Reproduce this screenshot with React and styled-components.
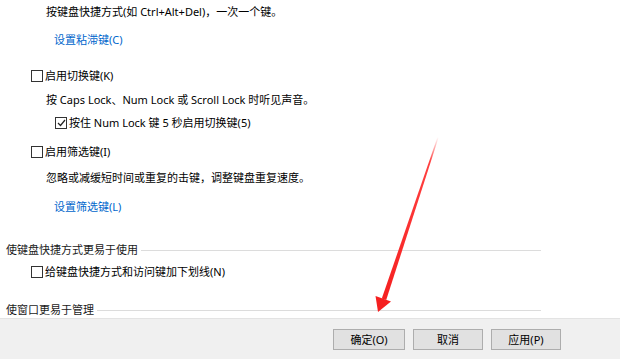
import React from "react";
import styled, { createGlobalStyle } from "styled-components";

const GlobalStyle = createGlobalStyle`
  html, body {
    margin: 0;
    padding: 0;
    background: #ffffff;
  }
  body {
    font-family: "Noto Sans", "Noto Sans CJK SC", sans-serif;
    font-size: 11px;
    color: #000000;
  }
`;

const Window = styled.div`
  position: relative;
  width: 620px;
  height: 359px;
  overflow: hidden;
  display: flex;
  flex-direction: column;
`;

const Content = styled.div`
  height: 318px;
  overflow: hidden;
  display: flex;
  flex-direction: column;
  padding-right: 79px;
`;

const Row = styled.div`
  display: flex;
  align-items: center;
  height: 20px;
  line-height: 20px;
  margin-top: ${(p) => p.$gap || 0}px;
  padding-left: ${(p) => p.$indent || 0}px;
  white-space: nowrap;
`;

const Link = styled.span`
  color: #0066cc;
`;

const Box = styled.span`
  width: 10px;
  height: 10px;
  border: 1px solid #333333;
  background: #ffffff;
  margin-right: 2px;
  flex: none;
  display: flex;
  align-items: center;
  justify-content: center;
`;

const Heading = styled(Row)`
  color: #1a1a1a;
  &::after {
    content: "";
    flex: 1;
    height: 1px;
    background: #dcdcdc;
    margin-left: 3px;
    margin-top: 1px;
  }
`;

const Footer = styled.div`
  flex: 1;
  background: #f0f0f0;
  border-top: 1px solid #e3e3e3;
  display: flex;
  justify-content: flex-end;
  align-items: flex-start;
  gap: 8px;
  padding: 10px 59px 0 0;
`;

const Button = styled.button`
  width: ${(p) => p.$w || 70}px;
  height: 21px;
  border: 1px solid #adadad;
  background: #e1e1e1;
  font-family: "Noto Sans", "Noto Sans CJK SC", sans-serif;
  font-size: 11px;
  color: #000000;
  padding: 0;
  line-height: 19px;
`;

const Overlay = styled.svg`
  position: absolute;
  left: 0;
  top: 0;
  pointer-events: none;
`;

const Check = ({ checked }) => (
  <Box>
    {checked && (
      <svg width="9" height="8" viewBox="0 0 9 8">
        <path d="M1 4 L3.5 6.5 L8 1" fill="none" stroke="#222" strokeWidth="1.2" />
      </svg>
    )}
  </Box>
);

const App = () => (
  <>
    <GlobalStyle />
    <Window>
      <Content>
        <Row $gap={2} $indent={46}>按键盘快捷方式(如 Ctrl+Alt+Del)，一次一个键。</Row>
        <Row $gap={8} $indent={54}>
          <Link>设置粘滞键(C)</Link>
        </Row>
        <Row $gap={16} $indent={31}>
          <Check />
          启用切换键(K)
        </Row>
        <Row $gap={4} $indent={46}>按 Caps Lock、Num Lock 或 Scroll Lock 时听见声音。</Row>
        <Row $gap={3} $indent={55}>
          <Check checked />
          按住 Num Lock 键 5 秒启用切换键(5)
        </Row>
        <Row $gap={9} $indent={31}>
          <Check />
          启用筛选键(I)
        </Row>
        <Row $gap={6} $indent={46}>忽略或减缓短时间或重复的击键，调整键盘重复速度。</Row>
        <Row $gap={9} $indent={54}>
          <Link>设置筛选键(L)</Link>
        </Row>
        <Heading $gap={23} $indent={6}>使键盘快捷方式更易于使用</Heading>
        <Row $gap={2} $indent={31}>
          <Check />
          给键盘快捷方式和访问键加下划线(N)
        </Row>
        <Heading $gap={18} $indent={6}>使窗口更易于管理</Heading>
      </Content>
      <Footer>
        <Button $w={72}>确定(O)</Button>
        <Button>取消</Button>
        <Button>应用(P)</Button>
      </Footer>
      <Overlay width="620" height="359" viewBox="0 0 620 359">
        <defs>
          <linearGradient id="shaft" x1="438" y1="137" x2="384" y2="299" gradientUnits="userSpaceOnUse">
            <stop offset="0" stopColor="#ff3030" stopOpacity="0" />
            <stop offset="0.15" stopColor="#ff2a2a" stopOpacity="0.9" />
            <stop offset="1" stopColor="#f52020" />
          </linearGradient>
        </defs>
        <polygon points="437.5,137 438.6,137.4 386.2,300 381.8,298.5" fill="url(#shaft)" />
        <polygon points="375.5,296 391,301.5 378,312" fill="#f52020" />
      </Overlay>
    </Window>
  </>
);

export default App;
